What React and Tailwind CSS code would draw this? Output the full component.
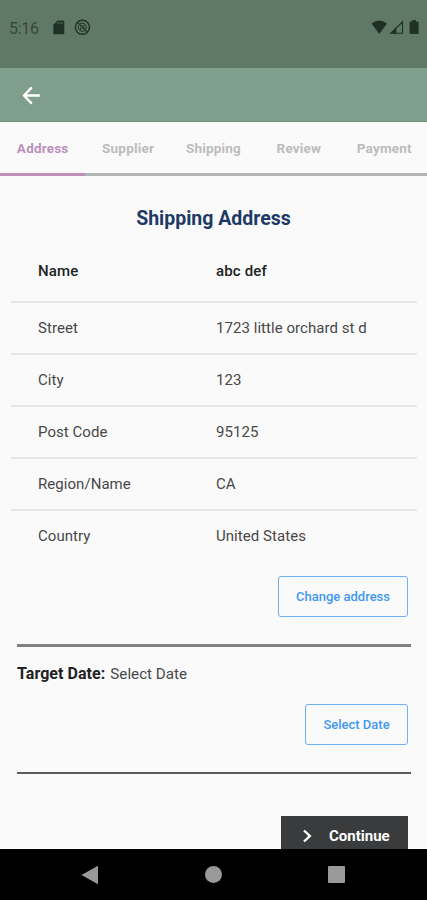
import React, { useState } from 'react';

const tabs = ['Address', 'Supplier', 'Shipping', 'Review', 'Payment'];

const address = [
  { label: 'Street', value: '1723 little orchard st d' },
  { label: 'City', value: '123' },
  { label: 'Post Code', value: '95125' },
  { label: 'Region/Name', value: 'CA' },
  { label: 'Country', value: 'United States' },
];

function StatusBar() {
  return (
    <div className="h-[68px] shrink-0 bg-[#607866] pt-[19px] pl-[9px] pr-[7px] flex items-start text-[#1f3024]">
      <span className="w-[32px] pt-px text-[16px] leading-[18px] tracking-[-0.3px] text-[#34493a]">5:16</span>
      {/* SD card */}
      <svg className="ml-[12px] mt-px" width="12" height="15" viewBox="0 0 12 15" fill="currentColor">
        <path d="M4.6 0.5H10Q11.3 0.5 11.3 1.8V13Q11.3 14.3 10 14.3H1.6Q0.3 14.3 0.3 13V4.8Z" />
        <path d="M5 2v2M7 2v2M9 2v2" stroke="#607866" strokeWidth="0.8" />
      </svg>
      <svg className="ml-[9px]" width="17" height="17" viewBox="0 0 17 17" fill="none" stroke="currentColor">
        <circle cx="8.4" cy="8.2" r="7" strokeWidth="1.4" />
        <path d="M6.2 4.6Q8.6 3.4 10.8 5Q13.2 7.3 12 10.2M10.4 12Q7.6 13 5.6 11.2Q3.6 8.9 4.5 6.6" strokeWidth="1" />
        <path d="M3.8 3.6L13 12.8" strokeWidth="1.3" />
        <path d="M7.8 6.2L10.6 6.8L10.2 8.8ZM6 8L8 10.2L6 10.4Z" fill="currentColor" stroke="none" />
      </svg>
      <svg className="ml-auto mt-px" width="17" height="15" viewBox="0 0 17 15" fill="currentColor">
        <path d="M0.5 3.6Q8.3 -2.6 16.1 3.6L8.3 14Z" />
      </svg>
      <svg className="ml-[1px] mt-px" width="15" height="15" viewBox="0 0 15 15" fill="currentColor">
        <path d="M13.5 1.8V13.3H2Z" fill="none" stroke="currentColor" strokeWidth="1.1" />
        <path d="M7.4 7.2V13.8H0.8Z" />
      </svg>
      <svg className="ml-[5px] mt-px" width="11" height="15" viewBox="0 0 11 15" fill="currentColor">
        <path d="M3.2 0H7V1.4H8.6Q9.6 1.4 9.6 2.4V13Q9.6 14 8.6 14H1.6Q0.6 14 0.6 13V2.4Q0.6 1.4 1.6 1.4H3.2Z" />
      </svg>
    </div>
  );
}

function OutlineButton({ className, children }) {
  return (
    <button
      type="button"
      className={`h-[41px] rounded-[3px] border-[1.5px] border-[#6cb0f5] text-[13px] font-medium text-[#3f98f0] ${className}`}
    >
      {children}
    </button>
  );
}

export default function App() {
  const [active, setActive] = useState('Address');

  return (
    <div className="w-full h-screen overflow-hidden flex flex-col bg-[#fafafa] font-[Roboto,sans-serif] text-[#484848]">
      <StatusBar />

      <header className="h-[54px] shrink-0 bg-[#7f9f8c] border-b border-[#6f9079] flex items-center pl-[22px] pt-px">
        <button type="button" aria-label="Back">
          <svg width="19" height="19" viewBox="0 0 19 19" fill="none" stroke="#fff" strokeWidth="2.3" strokeLinejoin="round">
            <path d="M9.8 1.4L1.9 9.5L9.8 17.6M1.9 9.5H17.8" />
          </svg>
        </button>
      </header>

      {/* Steps */}
      <nav className="h-[54px] shrink-0 grid grid-cols-5 text-[13.5px] font-bold">
        {tabs.map(tab => (
          <button
            key={tab}
            type="button"
            onClick={() => setActive(tab)}
            className={`border-b-[3px] pt-px tracking-[0.2px] ${
              tab === active ? 'border-[#bd8fb9] text-[#bb90bb]' : 'border-[#b5b5b5] text-[#bcbcbc]'
            }`}
          >
            {tab}
          </button>
        ))}
      </nav>

      <main className="flex-1 min-h-0 overflow-hidden">
        <h1 className="mt-[31px] text-center text-[19.5px] leading-6 font-bold text-[#1d3a66]">Shipping Address</h1>

        <div className="mt-[10px] ml-[11px] mr-[10px] text-[15px] tracking-[0.05px]">
          <div className="h-[62px] flex items-center border-b-2 border-[#e8e8e8] font-medium tracking-[0.15px] text-[#222]">
            <span className="w-[205px] pl-[27px]">Name</span>
            <span>abc def</span>
          </div>
          {address.map(row => (
            <div key={row.label} className="h-[52px] flex items-center border-b-2 border-[#e8e8e8] last:border-transparent">
              <span className="w-[205px] pl-[27px]">{row.label}</span>
              <span>{row.value}</span>
            </div>
          ))}
        </div>

        <div className="mt-[13px] pr-[19px] flex justify-end">
          <OutlineButton className="w-[130px]">Change address</OutlineButton>
        </div>

        <hr className="mt-[27px] ml-[17px] mr-4 border-t-[3px] border-[#808080]" />

        <p className="mt-[17px] ml-[17px] flex items-center gap-[5px] text-[15.2px] leading-5">
          <span className="text-base leading-5 font-bold tracking-[0.05px] text-[#222]">Target Date:</span>
          <span>Select Date</span>
        </p>

        <div className="mt-[20px] pr-[19px] flex justify-end">
          <OutlineButton className="w-[103px]">Select Date</OutlineButton>
        </div>

        <hr className="mt-[27px] ml-[17px] mr-4 border-t-2 border-[#5c5c5c]" />

        <div className="mt-[42px] pr-[19px] flex justify-end">
          <button
            type="button"
            className="w-[127px] h-[40px] shrink-0 bg-[#393b3c] text-white text-[15px] font-bold flex items-center pl-[21px]"
          >
            <svg width="11" height="14" viewBox="0 0 11 14" fill="none" stroke="#fff" strokeWidth="2.4">
              <path d="M2 1.5L7.8 7L2 12.5" />
            </svg>
            <span className="ml-[16px]">Continue</span>
          </button>
        </div>
      </main>

      {/* Android navigation bar */}
      <div className="h-[51px] shrink-0 bg-black flex items-center pl-[81px]">
        <svg width="18" height="20" viewBox="0 0 18 20" fill="#999">
          <path d="M0.5 10L17 0.8V19.2Z" />
        </svg>
        <div className="ml-[106px] size-[17px] rounded-full bg-[#999]" />
        <div className="ml-[106px] size-[17px] rounded-[1px] bg-[#999]" />
      </div>
    </div>
  );
}
